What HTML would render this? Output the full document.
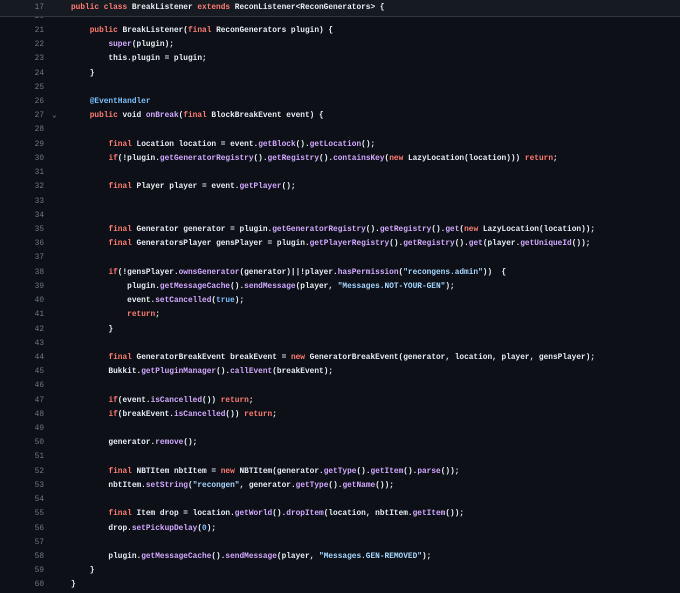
<!DOCTYPE html>
<html><head><meta charset="utf-8"><style>
body{margin:0;background:#0d1117;width:680px;height:593px;overflow:hidden;position:relative;font-family:"Liberation Mono",monospace;font-size:7.8px;color:#e6edf3;font-weight:bold}
.hdr{position:absolute;left:0;top:0;width:680px;height:16px;background:#161b22;border-bottom:1px solid #30363d;z-index:2}
.code{position:absolute;left:0;top:9.7px;width:680px}
.l{height:14.23px;line-height:14.23px;position:relative;white-space:pre}
.n{position:absolute;left:0;width:44px;text-align:right;color:#6e7681;font-weight:normal}
.c{position:absolute;left:71px}
.k{color:#ff7b72}.f{color:#d2a8ff}.s{color:#a5d6ff}.a{color:#79c0ff}
.chev{position:absolute;left:52px;color:#6e7681}
</style></head><body>
<div class="hdr"><div class="l" style="line-height:17px;height:17px"><span class="n">17</span><span class="c"><span class="k">public class</span> BreakListener <span class="k">extends</span> ReconListener&lt;ReconGenerators&gt; {</span></div></div>
<div class="code">
<div class="l"><span class="n">20</span></div>
<div class="l"><span class="n">21</span><span class="c">    <span class="k">public</span> BreakListener(<span class="k">final</span> ReconGenerators plugin) {</span></div>
<div class="l"><span class="n">22</span><span class="c">        <span class="f">super</span>(plugin);</span></div>
<div class="l"><span class="n">23</span><span class="c">        this.plugin = plugin;</span></div>
<div class="l"><span class="n">24</span><span class="c">    }</span></div>
<div class="l"><span class="n">25</span></div>
<div class="l"><span class="n">26</span><span class="c">    <span class="a">@EventHandler</span></span></div>
<div class="l"><span class="n">27</span><span class="chev">&#8964;</span><span class="c">    <span class="k">public</span> void <span class="f">onBreak</span>(<span class="k">final</span> BlockBreakEvent event) {</span></div>
<div class="l"><span class="n">28</span></div>
<div class="l"><span class="n">29</span><span class="c">        <span class="k">final</span> Location location = event.<span class="f">getBlock</span>().<span class="f">getLocation</span>();</span></div>
<div class="l"><span class="n">30</span><span class="c">        <span class="k">if</span>(!plugin.<span class="f">getGeneratorRegistry</span>().<span class="f">getRegistry</span>().<span class="f">containsKey</span>(<span class="k">new</span> LazyLocation(location))) <span class="k">return</span>;</span></div>
<div class="l"><span class="n">31</span></div>
<div class="l"><span class="n">32</span><span class="c">        <span class="k">final</span> Player player = event.<span class="f">getPlayer</span>();</span></div>
<div class="l"><span class="n">33</span></div>
<div class="l"><span class="n">34</span></div>
<div class="l"><span class="n">35</span><span class="c">        <span class="k">final</span> Generator generator = plugin.<span class="f">getGeneratorRegistry</span>().<span class="f">getRegistry</span>().<span class="f">get</span>(<span class="k">new</span> LazyLocation(location));</span></div>
<div class="l"><span class="n">36</span><span class="c">        <span class="k">final</span> GeneratorsPlayer gensPlayer = plugin.<span class="f">getPlayerRegistry</span>().<span class="f">getRegistry</span>().<span class="f">get</span>(player.<span class="f">getUniqueId</span>());</span></div>
<div class="l"><span class="n">37</span></div>
<div class="l"><span class="n">38</span><span class="c">        <span class="k">if</span>(!gensPlayer.<span class="f">ownsGenerator</span>(generator)||!player.<span class="f">hasPermission</span>(<span class="s">"recongens.admin"</span>))  {</span></div>
<div class="l"><span class="n">39</span><span class="c">            plugin.<span class="f">getMessageCache</span>().<span class="f">sendMessage</span>(player, <span class="s">"Messages.NOT-YOUR-GEN"</span>);</span></div>
<div class="l"><span class="n">40</span><span class="c">            event.<span class="f">setCancelled</span>(<span class="a">true</span>);</span></div>
<div class="l"><span class="n">41</span><span class="c">            <span class="k">return</span>;</span></div>
<div class="l"><span class="n">42</span><span class="c">        }</span></div>
<div class="l"><span class="n">43</span></div>
<div class="l"><span class="n">44</span><span class="c">        <span class="k">final</span> GeneratorBreakEvent breakEvent = <span class="k">new</span> GeneratorBreakEvent(generator, location, player, gensPlayer);</span></div>
<div class="l"><span class="n">45</span><span class="c">        Bukkit.<span class="f">getPluginManager</span>().<span class="f">callEvent</span>(breakEvent);</span></div>
<div class="l"><span class="n">46</span></div>
<div class="l"><span class="n">47</span><span class="c">        <span class="k">if</span>(event.<span class="f">isCancelled</span>()) <span class="k">return</span>;</span></div>
<div class="l"><span class="n">48</span><span class="c">        <span class="k">if</span>(breakEvent.<span class="f">isCancelled</span>()) <span class="k">return</span>;</span></div>
<div class="l"><span class="n">49</span></div>
<div class="l"><span class="n">50</span><span class="c">        generator.<span class="f">remove</span>();</span></div>
<div class="l"><span class="n">51</span></div>
<div class="l"><span class="n">52</span><span class="c">        <span class="k">final</span> NBTItem nbtItem = <span class="k">new</span> NBTItem(generator.<span class="f">getType</span>().<span class="f">getItem</span>().<span class="f">parse</span>());</span></div>
<div class="l"><span class="n">53</span><span class="c">        nbtItem.<span class="f">setString</span>(<span class="s">"recongen"</span>, generator.<span class="f">getType</span>().<span class="f">getName</span>());</span></div>
<div class="l"><span class="n">54</span></div>
<div class="l"><span class="n">55</span><span class="c">        <span class="k">final</span> Item drop = location.<span class="f">getWorld</span>().<span class="f">dropItem</span>(location, nbtItem.<span class="f">getItem</span>());</span></div>
<div class="l"><span class="n">56</span><span class="c">        drop.<span class="f">setPickupDelay</span>(<span class="a">0</span>);</span></div>
<div class="l"><span class="n">57</span></div>
<div class="l"><span class="n">58</span><span class="c">        plugin.<span class="f">getMessageCache</span>().<span class="f">sendMessage</span>(player, <span class="s">"Messages.GEN-REMOVED"</span>);</span></div>
<div class="l"><span class="n">59</span><span class="c">    }</span></div>
<div class="l"><span class="n">60</span><span class="c">}</span></div>
</div>
</body></html>
